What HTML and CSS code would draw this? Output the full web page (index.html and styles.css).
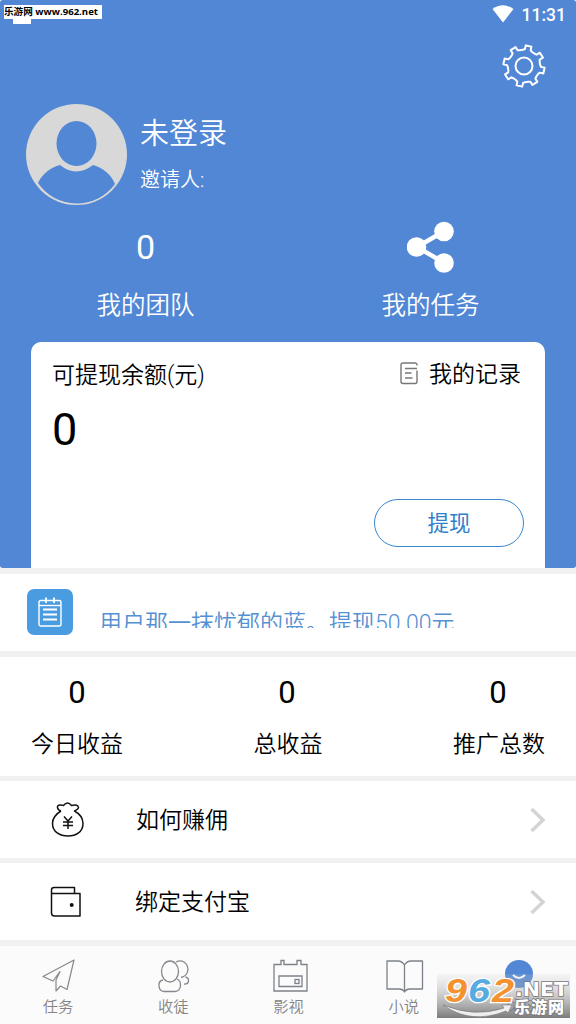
FILE: index.html
```html
<!DOCTYPE html>
<html lang="zh-CN">
<head>
<meta charset="utf-8">
<title>我的</title>
<link rel="stylesheet" href="styles.css">
</head>
<body>
<div class="screen">
  <header class="hero">
    <div class="status">
      <svg width="22" height="18" viewBox="0 0 22 18"><path d="M0.5 4Q11-3.500 21.500 4L11 17.500Z" fill="#fff"/></svg>
      <span class="clock">11:31</span>
    </div>
    <div class="settings">
      <svg width="44" height="44" viewBox="0 0 44 44" fill="none" stroke="#fff" stroke-width="2" stroke-linejoin="round">
        <path id="gear" d="M14.500 7.500L19 5.500"/>
        <circle cx="22" cy="22" r="8.500"/>
      </svg>
    </div>
    <div class="profile">
      <svg class="avatar" width="102" height="102" viewBox="0 0 102 102">
        <circle cx="50.500" cy="50.500" r="50.500" fill="#d8d8d8"/>
        <ellipse cx="50.500" cy="39.500" rx="20" ry="22.500" fill="#5187d5"/>
        <path d="M12 79C16 70 25 63 34 61Q50 74 67 61C77 64 85 70 89 80A47 47 0 0 1 12 79Z" fill="#5187d5"/>
      </svg>
      <div class="who">
        <div class="name">未登录</div>
        <div class="inviter">邀请人:</div>
      </div>
    </div>
    <div class="shortcuts">
      <div class="shortcut">
        <div class="shortcut-top">0</div>
        <div class="shortcut-label">我的团队</div>
      </div>
      <div class="shortcut">
        <div class="shortcut-top">
          <svg width="48" height="52" viewBox="0 0 48 52" fill="#fff"><path d="M10 26L37.500 10M10 26L37.500 42" stroke="#fff" stroke-width="4.500"/><circle cx="9.500" cy="26" r="9.800"/><circle cx="37" cy="10.500" r="9.800"/><circle cx="37" cy="42" r="9.800"/></svg>
        </div>
        <div class="shortcut-label">我的任务</div>
      </div>
    </div>
    <section class="wallet">
      <div class="wallet-head">
        <span class="wallet-title">可提现余额(元)</span>
        <span class="records">
          <svg width="18" height="23" viewBox="0 0 18 23" fill="none" stroke="#777" stroke-width="1.400"><path d="M17 3.500V3Q17 1 15 1H3Q1 1 1 3V19.500Q1 21.500 3 21.500H15Q17 21.500 17 19.500V8.500M5 6.500H17M5 11H11.500M5 16H12.500"/></svg>
          <span>我的记录</span>
        </span>
      </div>
      <div class="balance">0</div>
      <button class="withdraw">提现</button>
    </section>
  </header>

  <section class="notice">
    <div class="notice-icon">
      <svg width="24" height="30" viewBox="0 0 24 30" fill="none" stroke="#fff" stroke-width="1.400"><rect x="1" y="3.500" width="22" height="25.500" rx="2"/><path d="M1 8.500H23"/><path d="M8 0.500V6M16 0.500V6" stroke-width="1.800"/><path d="M5 12.500H19M5 17.500H19M5 22.500H19" stroke-width="2"/></svg>
    </div>
    <div class="ticker"><div class="ticker-text">用户那一抹忧郁的蓝。提现50.00元</div></div>
  </section>

  <section class="stats">
    <div class="stat"><div class="stat-value">0</div><div>今日收益</div></div>
    <div class="stat"><div class="stat-value">0</div><div>总收益</div></div>
    <div class="stat"><div class="stat-value">0</div><div>推广总数</div></div>
  </section>

  <a class="row">
    <svg class="row-icon" width="34" height="36" viewBox="0 0 34 36" fill="none" stroke="#111" stroke-width="1.500" stroke-linejoin="round"><path d="M10 9C6 8 5 3 9 3Q12 3 12.500 3.500Q16.500-1.500 20.500 3.500Q27 2 27.500 5.500Q27.500 7 23.500 9C29 12 32 16 32 21.500C32 30 25 34 17 34S1.500 30 1.500 21.500C1.500 16 5 12 10 9"/><path d="M13 14.500L17 19L21 14.500M12 20H22M12 23.500H22M17 19V27"/></svg>
    <span>如何赚佣</span>
    <svg class="chevron" width="16" height="26" viewBox="0 0 16 26"><path d="M1.500 2L13 13L1.500 24" fill="none" stroke="#d4d4d4" stroke-width="3.500"/></svg>
  </a>
  <a class="row second">
    <svg class="row-icon" width="34" height="36" viewBox="0 0 34 36" fill="none" stroke="#111" stroke-width="1.500" stroke-linejoin="round"><path d="M24.500 9.500V3.500H4Q1.500 3.500 1.500 6V29Q1.500 32 4.500 32H30V9.500H2"/><circle cx="21.700" cy="21" r="2" fill="#111" stroke="none"/></svg>
    <span>绑定支付宝</span>
    <svg class="chevron" width="16" height="26" viewBox="0 0 16 26"><path d="M1.500 2L13 13L1.500 24" fill="none" stroke="#d4d4d4" stroke-width="3.500"/></svg>
  </a>

  <nav class="tabs">
    <div class="tab">
      <svg width="40" height="36" viewBox="0 0 40 36" fill="none" stroke="#85888c" stroke-width="1.200" stroke-linejoin="round"><path d="M36 2L5 18.500L15 23L22 13.500L18 22V33L22.500 28L29 31.500Z"/></svg>
      <span>任务</span>
    </div>
    <div class="tab">
      <svg width="40" height="36" viewBox="0 0 40 36" fill="none" stroke="#85888c" stroke-width="1.300"><ellipse cx="17" cy="13.500" rx="8.500" ry="10.500"/><path d="M10 22C4 23 5 33 11 33.500H22C29 33 29 23 24 21M23 4C29 1 35 5 35 12Q34 18 28 19.500M32.500 19C37 20 36.500 26.500 31 26"/></svg>
      <span>收徒</span>
    </div>
    <div class="tab">
      <svg width="40" height="36" viewBox="0 0 40 36" fill="none" stroke="#7b828a" stroke-width="1.300"><path d="M5 6.500H12V2.500H15V6.500H28V2.500H32V6.500H38V33H5ZM10 18H33V28.500H10Z"/><rect x="26" y="21.500" width="4" height="4"/></svg>
      <span>影视</span>
    </div>
    <div class="tab">
      <svg width="40" height="36" viewBox="0 0 40 36" fill="none" stroke="#7b828a" stroke-width="1.300" stroke-linejoin="round"><path d="M20.500 7Q18 3 14 3H3V31H15Q19 31 20.500 34Q22 31 26 31H38.500V3H27Q23 3 20.500 7V33"/></svg>
      <span>小说</span>
    </div>
    <div class="tab active">
      <svg width="40" height="36" viewBox="0 0 40 36"><circle cx="20" cy="18" r="14" fill="#5187d5"/><path d="M14 19Q20 25 26 19" stroke="#fff" stroke-width="2" fill="none"/></svg>
      <span>我的</span>
    </div>
  </nav>

  <div class="source-notch"></div>
  <div class="source-tag"><span>乐游网</span><span>www.962.net</span></div>
  <div class="watermark">
    <svg width="133" height="44" viewBox="0 0 133 44">
      <defs><linearGradient id="shade" x2="0" y2="1"><stop offset="0" stop-color="#ccc" stop-opacity=".15"/><stop offset="1" stop-color="#707070" stop-opacity=".92"/></linearGradient></defs>
      <rect width="133" height="44" fill="url(#shade)"/>
      <path d="M6 31Q38 44 67 34L65 31L75 31L71 39L69 37Q34 51 6 31Z" fill="#eee" stroke="#777" stroke-width=".6"/>
      <g class="mark-num"><text x="8" y="28" textLength="22" lengthAdjust="spacingAndGlyphs" fill="#f59230">9</text><text x="31" y="28" textLength="22" lengthAdjust="spacingAndGlyphs" fill="#58abe0">6</text><text x="55" y="28" textLength="22" lengthAdjust="spacingAndGlyphs" fill="#f59230">2</text></g>
      <text class="mark-net" x="78" y="22" textLength="53" lengthAdjust="spacingAndGlyphs">.NET</text>
      <text class="mark-cn" x="77" y="39" textLength="50">乐游网</text>
    </svg>
  </div>
</div>
<script src="gear.js"></script>
</body>
</html>
```
FILE: gear.js
```js
// Builds the outline of the eight-toothed settings gear.
const points = [];
for (let i = 0; i < 8; i++) {
  const mid = i * 45 + 13;
  [[-17, 16.2], [-10, 17], [-8, 20.7], [8, 20.7], [10, 17], [17, 16.2]].forEach(([offset, radius]) => {
    const angle = (mid + offset) * Math.PI / 180;
    points.push((22 + radius * Math.sin(angle)).toFixed(2) + ' ' + (22 - radius * Math.cos(angle)).toFixed(2));
  });
}
document.getElementById('gear').setAttribute('d', 'M' + points.join('L') + 'Z');
```
FILE: styles.css
```css
* { box-sizing: border-box; }
body { margin: 0; background: #f1f1f1; }
svg { display: block; flex: none; }

.screen {
  position: relative;
  width: 576px;
  height: 1024px;
  overflow: hidden;
  display: flex;
  flex-direction: column;
  font-family: Roboto, "Noto Sans CJK SC DemiLight", "Noto Sans CJK SC", sans-serif;
  font-weight: 350;
  font-size: 23px;
  line-height: 30px;
  color: #000;
  white-space: nowrap;
}

.hero {
  height: 568px;
  background: #5187d5;
  color: #fff;
  border-radius: 3px;
}
.status {
  height: 30px;
  padding: 5px 10px 0 0;
  display: flex;
  justify-content: flex-end;
  gap: 8px;
}
.clock { font-size: 17.5px; font-weight: 500; line-height: 20px; }
.settings { height: 74px; padding: 14px 30px 0 0; display: flex; justify-content: flex-end; }
.profile { height: 102px; padding-left: 26px; display: flex; gap: 12px; }
.name { font-size: 29px; line-height: 36px; padding-top: 12px; }
.inviter { font-size: 20px; line-height: 28px; margin-top: 14px; }

.shortcuts { height: 136px; padding: 15px 3px 0; display: flex; }
.shortcut { width: 285px; text-align: center; }
.shortcut-top { height: 52px; display: flex; align-items: center; justify-content: center; font-size: 34px; font-weight: 400; }
.shortcut-label { font-size: 24.5px; line-height: 34px; margin-top: 16px; }

.wallet {
  height: 226px;
  margin: 0 31px;
  padding: 16px 21px 0;
  background: #fff;
  border-radius: 10px 10px 0 0;
  color: #000;
  display: flex;
  flex-direction: column;
}
.wallet-head { height: 30px; display: flex; justify-content: space-between; padding-right: 3px; }
.wallet-title { padding-top: 3px; }
.records { display: flex; align-items: center; gap: 11px; }
.records span { padding-top: 3px; }
.balance { font-size: 45px; line-height: 50px; margin-top: 17px; font-weight: 400; }
.withdraw {
  align-self: flex-end;
  width: 150px;
  height: 48px;
  margin-top: 44px;
  padding: 2px 0 0;
  border: 1.5px solid #3a86cf;
  border-radius: 24px;
  background: #fff;
  color: #2f80cc;
  font: 400 21.5px/44px Roboto, "Noto Sans CJK SC", sans-serif;
}

.notice { height: 77px; margin-top: 6px; padding: 15px 27px; background: #fff; display: flex; gap: 26px; }
.notice-icon {
  width: 46px;
  height: 46px;
  border-radius: 7px;
  background: #4a9ce0;
  display: flex;
  align-items: center;
  justify-content: center;
}
.ticker { height: 39px; overflow: hidden; color: #5590d2; }
.ticker-text { padding-top: 20px; }

.stats {
  height: 119px;
  margin-top: 6px;
  padding: 20px 31px 0;
  background: #fff;
  display: flex;
  justify-content: space-between;
  text-align: center;
}
.stat-value { font-size: 31px; line-height: 32px; margin-bottom: 21px; font-weight: 400; }
.stat:nth-child(n+2) .stat-value { margin-right: 2px; }

.row { height: 77px; margin-top: 5px; padding: 0 30px 0 51px; background: #fff; display: flex; align-items: center; }
.row span { margin-left: 51px; padding-top: 3px; flex: 1; }
.row.second .row-icon { margin-left: -1px; }

.tabs { height: 78px; margin-top: 6px; background: #fbfbfb; display: flex; font-size: 15.3px; line-height: 20px; color: #858585; }
.tab { flex: 1; display: flex; flex-direction: column; align-items: center; padding: 12px 0 0 1px; gap: 3px; }
.active { padding-top: 10px; color: #5187d5; }

.source-tag {
  position: absolute;
  left: 4px;
  top: 5px;
  width: 98px;
  height: 14px;
  padding: 0 4px 0 0;
  background: #fff;
  color: #000;
  font: 700 9.6px/14px "Open Sans", "Noto Sans CJK SC", sans-serif;
  font-stretch: 100%;
  display: flex;
  justify-content: space-between;
}
.source-notch { position: absolute; left: 13px; top: 19px; width: 18px; height: 5px; background: #fff; }
.watermark { position: absolute; left: 437px; top: 974px; }
.mark-num { font: italic 900 33px "Liberation Sans", sans-serif; stroke: #fff; stroke-width: 2.5; paint-order: stroke; }
.mark-net { font: 900 19px "DejaVu Sans", sans-serif; fill: #fff; stroke: #777; stroke-width: 1.5; paint-order: stroke; }
.mark-cn { font: 900 16px "Noto Sans CJK SC", sans-serif; fill: #fff; stroke: #777; stroke-width: 1.5; paint-order: stroke; }
```
